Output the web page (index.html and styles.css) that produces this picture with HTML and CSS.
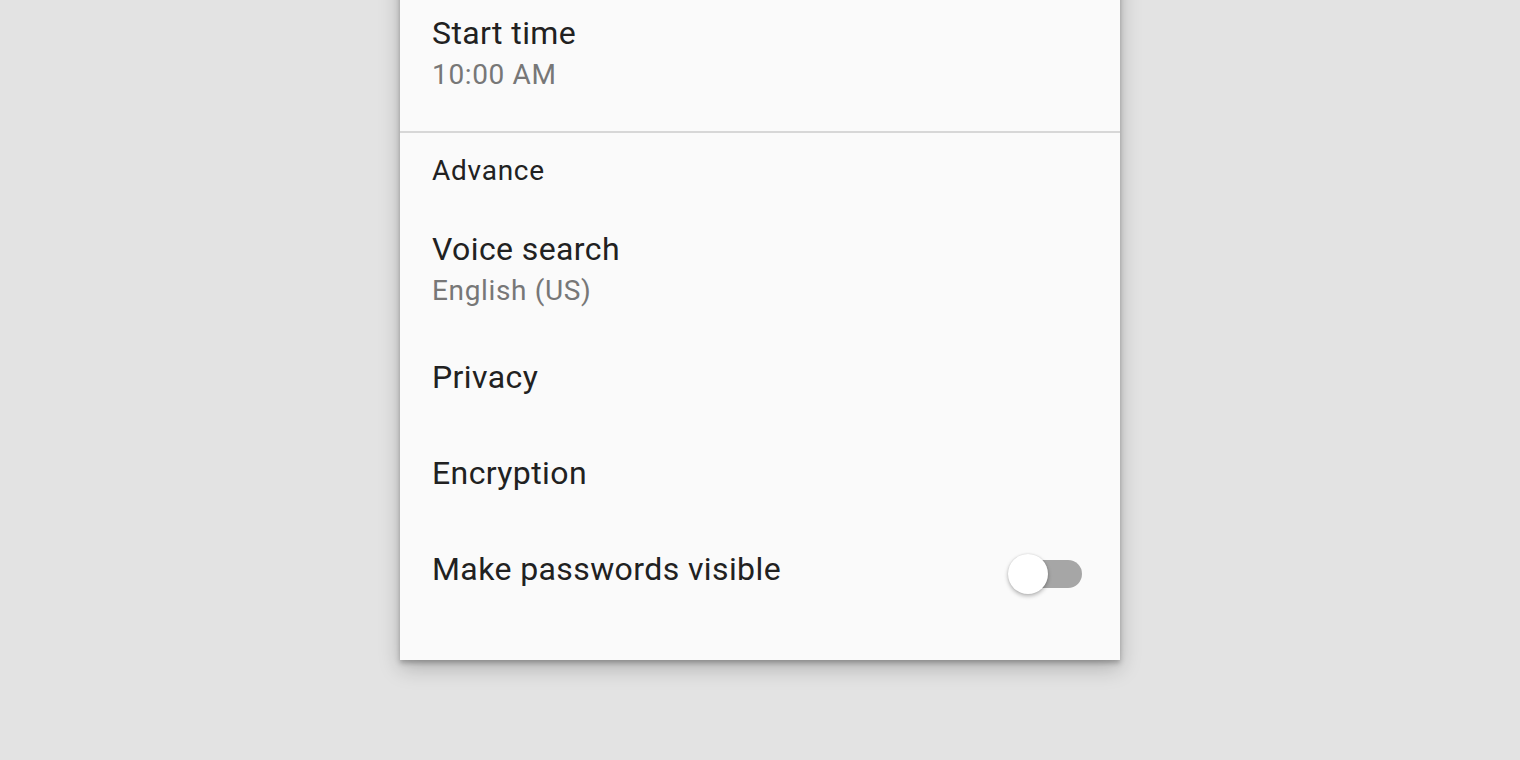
FILE: index.html
```html
<!DOCTYPE html>
<html lang="en">
<head>
<meta charset="utf-8">
<title>Settings</title>
<link rel="stylesheet" href="styles.css">
</head>
<body>
<div class="card">
  <div class="item two-line first">
    <div class="title">Start time</div>
    <div class="sub">10:00 AM</div>
  </div>
  <div class="divider"></div>
  <div class="subheader">Advance</div>
  <div class="item two-line">
    <div class="title">Voice search</div>
    <div class="sub">English (US)</div>
  </div>
  <div class="item single">
    <div class="title">Privacy</div>
  </div>
  <div class="item single">
    <div class="title">Encryption</div>
  </div>
  <div class="item single toggle-row">
    <div class="title">Make passwords visible</div>
    <div class="toggle"><span class="track"></span><span class="thumb"></span></div>
  </div>
</div>
</body>
</html>
```
FILE: styles.css
```css
html, body {
  margin: 0;
  padding: 0;
  background: #e3e3e3;
  height: 100%;
  overflow: hidden;
}
body {
  font-family: Roboto, "Noto Sans", sans-serif;
}
.card {
  width: 720px;
  margin: -40px auto 0;
  background: #fafafa;
  padding-bottom: 43px;
  box-shadow: 0 3px 5px rgba(0,0,0,0.25), 0 8px 20px rgba(0,0,0,0.22);
}
.item {
  padding: 0 32px;
}
.title {
  font-size: 32px;
  line-height: 40px;
  color: #212121;
  letter-spacing: 0.4px;
}
.sub {
  font-size: 28px;
  line-height: 44px;
  color: #777777;
  letter-spacing: 0.65px;
}
.item.first {
  padding-top: 53px;
  padding-bottom: 34px;
}
.item.two-line:not(.first) {
  padding-top: 38px;
  padding-bottom: 16px;
}
.item.single {
  padding-top: 28px;
  padding-bottom: 28px;
}
.divider {
  height: 2px;
  background: #d7d7d7;
}
.subheader {
  padding: 18px 32px 0;
  font-size: 28px;
  line-height: 40px;
  color: #212121;
  letter-spacing: 0.75px;
}
.toggle-row {
  display: flex;
  justify-content: space-between;
  align-items: flex-start;
  padding-right: 38px;
}
.toggle {
  position: relative;
  flex: none;
  width: 74px;
  height: 40px;
  margin: 5px 0 -5px;
}
.track {
  position: absolute;
  left: 6px;
  top: 6px;
  width: 68px;
  height: 28px;
  border-radius: 14px;
  background: #a6a6a6;
}
.thumb {
  position: absolute;
  left: 0;
  top: 0;
  width: 40px;
  height: 40px;
  border-radius: 50%;
  background: #ffffff;
  box-shadow: 0 2px 4px rgba(0,0,0,0.28), 0 0 2px rgba(0,0,0,0.12);
}
```
